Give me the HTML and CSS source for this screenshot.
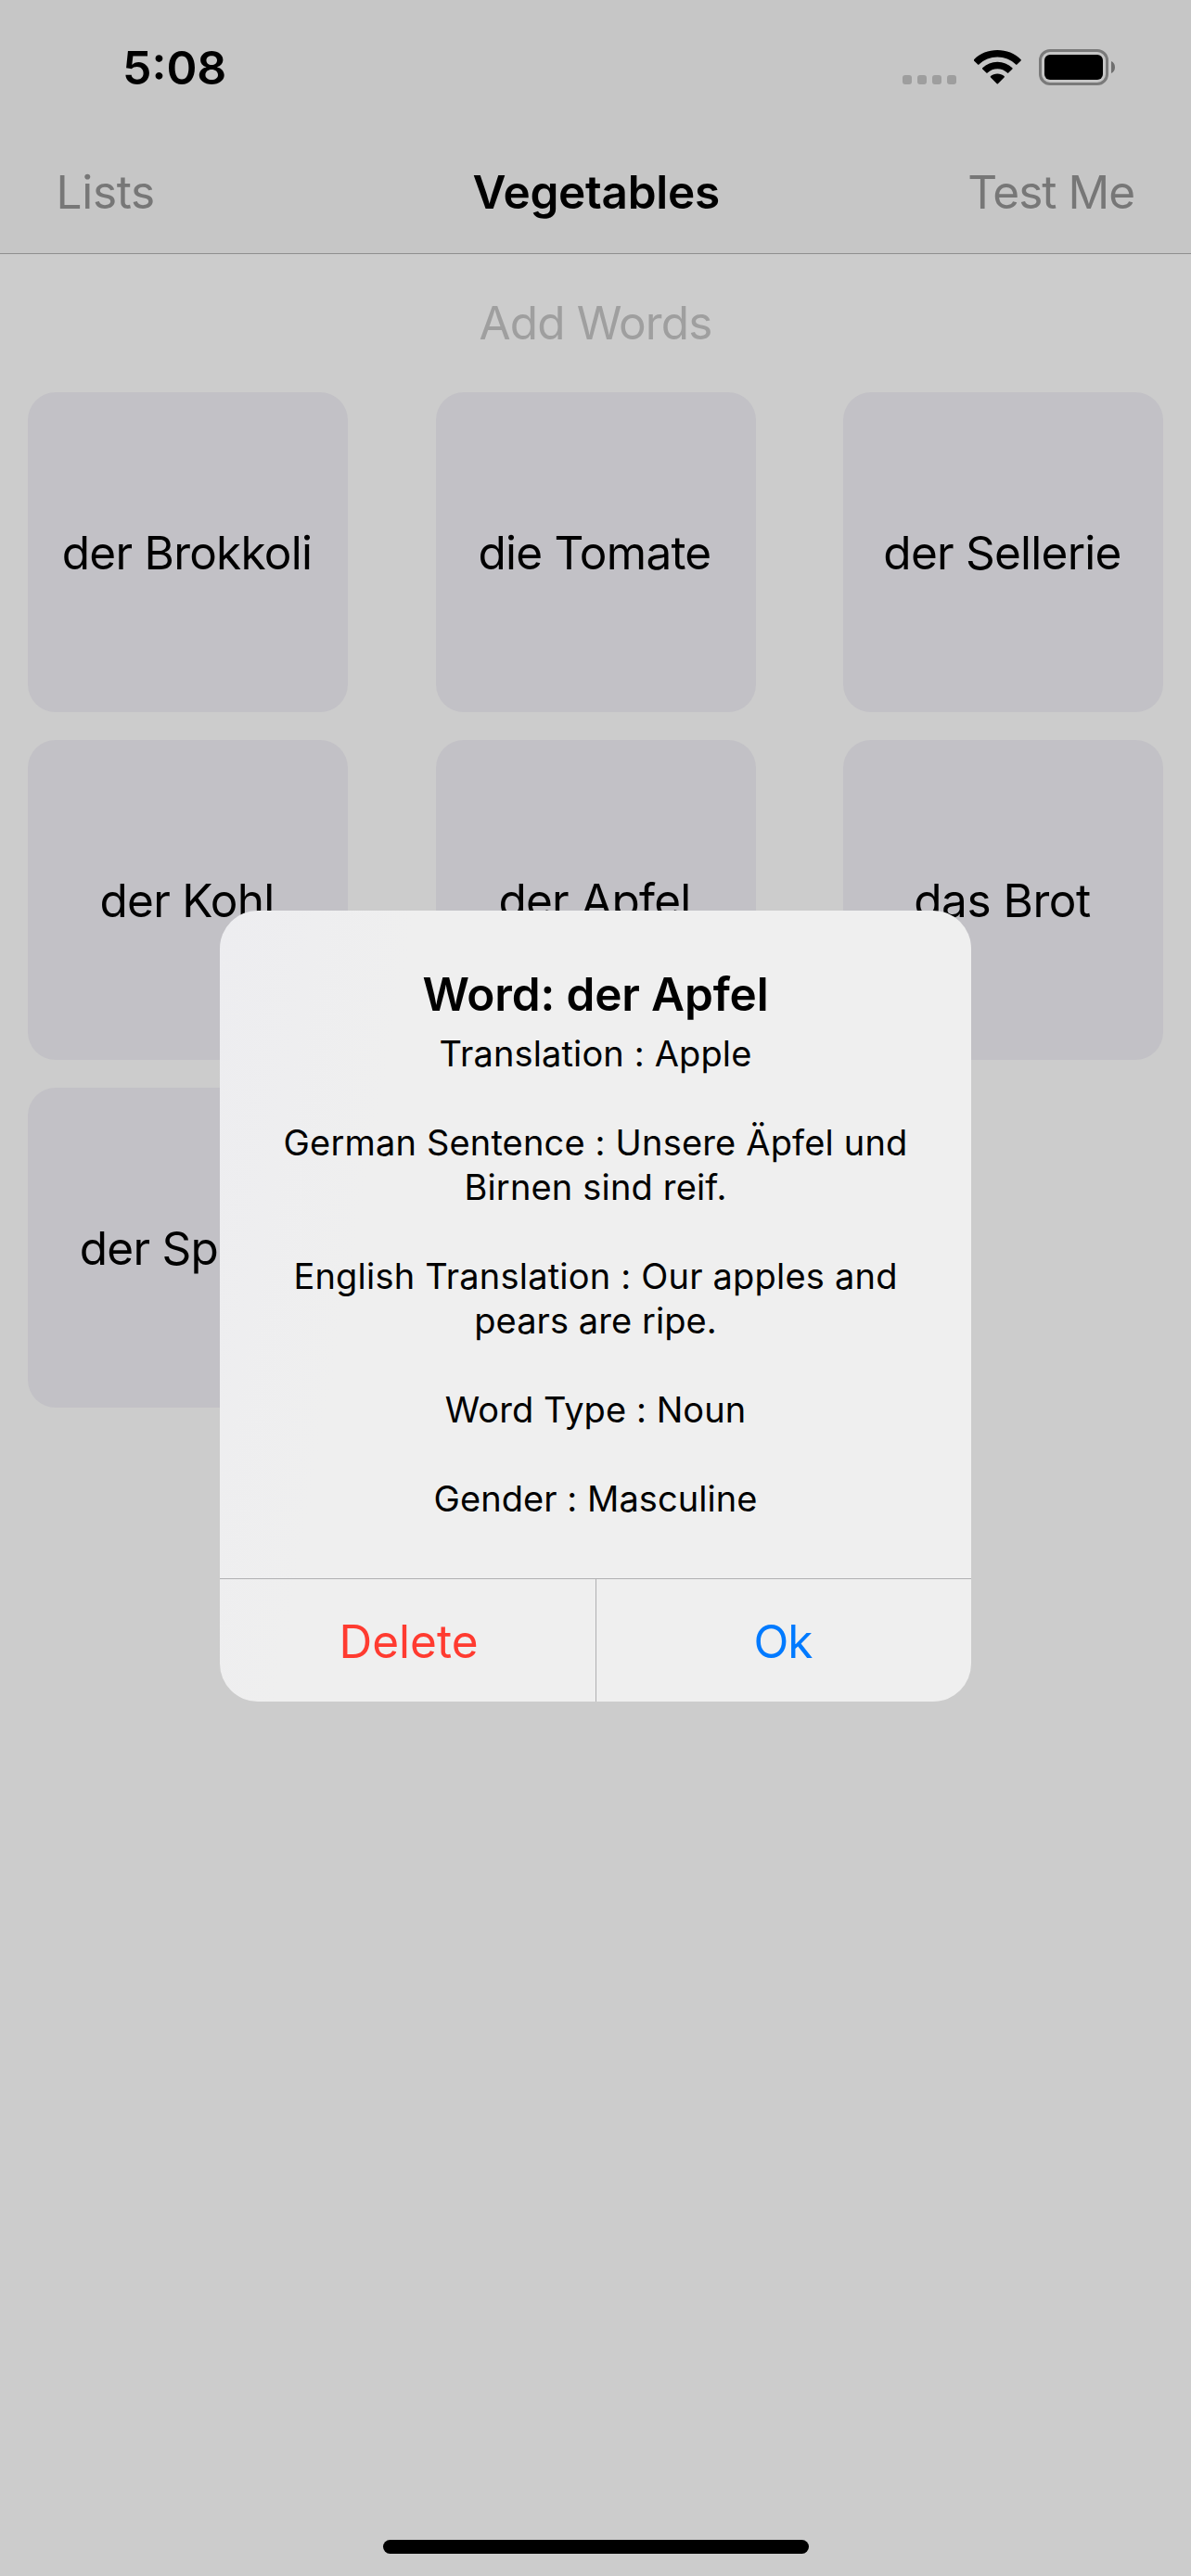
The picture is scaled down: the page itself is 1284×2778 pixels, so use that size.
FILE: index.html
```html
<!DOCTYPE html>
<html lang="en">
<head>
<meta charset="utf-8">
<title>Vegetables</title>
<link rel="stylesheet" href="styles.css">
</head>
<body>
<div class="screen">
  <header class="top">
    <div class="status">
      <span class="time">5:08</span>
      <div class="indicators">
        <div class="dots"><i></i><i></i><i></i><i></i></div>
        <svg class="wifi" width="51" height="37" viewBox="0 0 51 37">
          <path d="M25.3 0C35 0 44 3.6 50.6 10.2Q51.2 10.8 50.6 11.4L46.4 15.6Q45.8 16.2 45.2 15.6C39.8 10.4 32.8 7.6 25.3 7.6S10.800 10.400 5.400 15.600Q4.800 16.200 4.200 15.600L0 11.400Q-.5 10.800 0 10.200C6.600 3.600 15.600 0 25.300 0Z"/>
          <path d="M25.300 12.700C31.500 12.700 37 15 41.400 19.200Q42 19.800 41.400 20.400L37.200 24.600Q36.600 25.200 36 24.600C33 21.800 29.400 20.300 25.300 20.300S17.600 21.800 14.600 24.600Q14 25.200 13.400 24.600L9.200 20.400Q8.600 19.800 9.200 19.200C13.600 15 19.100 12.700 25.300 12.700Z"/>
          <path d="M25.300 25.400C28.100 25.400 30.700 26.400 32.600 28.100Q33.300 28.700 32.600 29.400L25.900 36.300Q25.300 36.900 24.700 36.300L18 29.400Q17.300 28.700 18 28.100C19.900 26.400 22.500 25.400 25.300 25.400Z"/>
        </svg>
        <svg class="battery" width="83" height="39" viewBox="0 0 83 39">
          <rect x="1.5" y="1.500" width="72" height="36" rx="10.500" fill="none" stroke="#7a7a7a" stroke-width="3"/>
          <rect x="6" y="6" width="63" height="27" rx="6"/>
          <path d="M78 13C80.500 14 82 16.500 82 19.500S80.500 25 78 26Z" fill="#6f6f6f"/>
        </svg>
      </div>
    </div>
    <nav class="nav">
      <span class="nav-left">Lists</span>
      <span class="nav-title">Vegetables</span>
      <span class="nav-right">Test Me</span>
    </nav>
  </header>
  <div class="add">Add Words</div>
  <main class="grid">
    <div class="card">der Brokkoli</div>
    <div class="card">die Tomate</div>
    <div class="card">der Sellerie</div>
    <div class="card">der Kohl</div>
    <div class="card">der Apfel</div>
    <div class="card brot">das Brot</div>
    <div class="card">der Spinat</div>
  </main>
  <div class="home"></div>
  <section class="alert" role="alertdialog">
    <div class="message">
      <h1>Word: der Apfel</h1>
      <p class="translation">Translation : Apple</p>
      <p class="german">German Sentence : Unsere Äpfel und<br>Birnen sind reif.</p>
      <p class="english">English Translation : Our apples and<br><span class="narrow">pears are ripe.</span></p>
      <p class="narrow">Word Type : Noun</p>
      <p class="narrow">Gender : Masculine</p>
    </div>
    <div class="actions">
      <div class="action delete">Delete</div>
      <div class="action ok">Ok</div>
    </div>
  </section>
</div>
</body>
</html>
```
FILE: styles.css
```css
* { box-sizing: border-box; }

body {
  margin: 0;
  background: #ccc;
  color: #000;
  font-family: "Inter", "Liberation Sans", sans-serif;
  font-size: 49.5px;
  line-height: 60px;
  white-space: nowrap;
}

.screen {
  position: relative;
  width: 1284px;
  height: 2778px;
  display: flex;
  flex-direction: column;
  overflow: hidden;
}

.top {
  background: #c6c6c6;
  border-bottom: 1px solid #8e8e8e;
}

.status {
  height: 141px;
  padding: 0 81px 0 132px;
  display: flex;
  justify-content: space-between;
}

.time {
  margin-top: 43px;
  font-size: 50px;
  font-weight: 600;
}

.indicators {
  display: flex;
  align-items: flex-start;
  padding-top: 53px;
}

.dots {
  display: flex;
  gap: 6px;
  margin-top: 28px;
}

.dots i {
  width: 10px;
  height: 10px;
  border-radius: 3px;
  background: #9e9e9e;
}

.wifi { margin: 1px 0 0 19px; }
.battery { margin-left: 19px; }

.nav {
  height: 132px;
  padding: 0 61px 0 60.5px;
  display: grid;
  grid-template-columns: 1fr auto 1fr;
  align-items: center;
}

.nav-left { color: #777; letter-spacing: -0.3px; }
.nav-title { padding-left: 2px; font-weight: 600; letter-spacing: -0.27px; }
.nav-right { color: #777; letter-spacing: -1px; text-align: right; }

.add {
  height: 149px;
  line-height: 149px;
  text-align: center;
  color: #9f9f9f;
  letter-spacing: -0.9px;
}

.grid {
  display: grid;
  grid-template-columns: repeat(3, 345px);
  grid-auto-rows: 345px;
  justify-content: space-between;
  row-gap: 30px;
  padding: 0 30px;
}

.card {
  display: flex;
  align-items: center;
  justify-content: center;
  padding-right: 2px;
  border-radius: 30px;
  background: #c2c1c6;
  letter-spacing: -0.76px;
}

.brot { letter-spacing: -0.45px; }

.home {
  width: 459px;
  height: 15px;
  margin: auto auto 24px;
  border-radius: 8px;
  background: #000;
}

.alert {
  position: absolute;
  left: 237px;
  top: 982px;
  width: 810px;
  height: 853px;
  display: flex;
  flex-direction: column;
  border-radius: 41px;
  background: linear-gradient(100deg, #ededf0 0%, #efefef 22%, #efefef 100%);
  overflow: hidden;
}

.message {
  flex: 1;
  padding-top: 60px;
  text-align: center;
  font-size: 38px;
  line-height: 48px;
}

.message h1 {
  margin: 0 0 10px;
  font-size: 49.5px;
  line-height: 60px;
  font-weight: 600;
  letter-spacing: -0.16px;
}

.message p { margin: 0 0 48px; }

.translation { letter-spacing: 0.14px; }
.german { letter-spacing: 0.17px; }
.english { letter-spacing: 0.2px; }
.narrow { letter-spacing: 0.06px; }

.actions {
  display: grid;
  grid-template-columns: 405px 1fr;
  height: 133px;
  border-top: 1px solid #b0b0b2;
}

.action {
  display: flex;
  align-items: center;
  justify-content: center;
  padding-top: 2px;
}

.delete { padding-left: 2px; color: #ff3b30; }

.ok {
  padding-right: 2px;
  border-left: 1px solid #b0b0b2;
  color: #007aff;
  letter-spacing: -1px;
}
```
